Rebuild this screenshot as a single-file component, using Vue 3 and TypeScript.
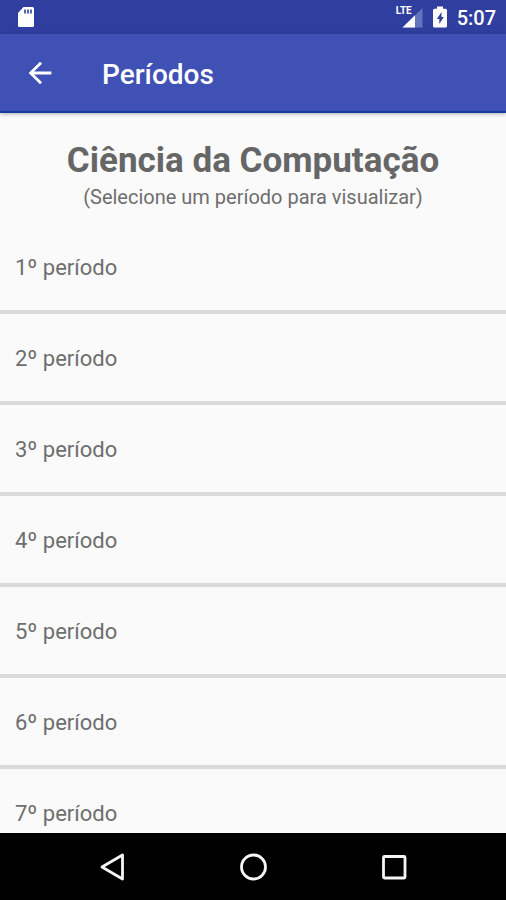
<script setup lang="ts">
interface Period {
  id: number
  label: string
}

const course = 'Ciência da Computação'
const periods: Period[] = Array.from({ length: 7 }, (_, i) => ({
  id: i + 1,
  label: `${i + 1}º período`,
}))
</script>

<template>
  <div class="screen">
    <div class="status">
      <svg class="sd" viewBox="0 0 18 22" aria-hidden="true">
        <path fill="#fff" d="M6.500 1H15.500a1.500 1.500 0 0 1 1.500 1.500v17a1.500 1.500 0 0 1-1.500 1.500h-13a1.500 1.500 0 0 1-1.500-1.500V7z" />
        <path stroke="#303f9f" stroke-width="1.600" d="M8 3.500v4M11 3.500v4M14 3.500v4" />
      </svg>
      <div class="indicators">
        <div class="signal">
          <svg viewBox="0 0 26 22" aria-hidden="true">
            <path fill="#6573bd" d="M25.500 2v19.500H5.500z" />
            <path fill="#fff" d="M18 9.300V21.500H5.500z" />
          </svg>
          <span class="lte">LTE</span>
        </div>
        <svg class="battery" viewBox="0 0 16 22" aria-hidden="true">
          <path fill="#fff" d="M5 .5h6v2.300H13.500A1.500 1.500 0 0 1 15 4.300V20a1.500 1.500 0 0 1-1.500 1.500h-11A1.500 1.500 0 0 1 1 20V4.300a1.500 1.500 0 0 1 1.500-1.500H5z" />
          <path fill="#303f9f" d="M9.500 6 4.800 13H7.300v5L11.800 11H9.500z" />
        </svg>
        <time class="clock">5:07</time>
      </div>
    </div>

    <header class="appbar">
      <button class="back" type="button" aria-label="Voltar">
        <svg viewBox="0 0 24 24" aria-hidden="true">
          <path fill="#fff" d="M20 11H7.830l5.590-5.590L12 4l-8 8 8 8 1.410-1.410L7.830 13H20z" />
        </svg>
      </button>
      <h1 class="title">Períodos</h1>
    </header>

    <main class="content">
      <div class="intro">
        <h2 class="course">{{ course }}</h2>
        <p class="hint">(Selecione um período para visualizar)</p>
      </div>
      <ul class="list">
        <li v-for="period in periods" :key="period.id" class="item">
          <button class="row" type="button">{{ period.label }}</button>
        </li>
      </ul>
    </main>

    <nav class="navbar">
      <button class="key" type="button" aria-label="Anterior">
        <svg viewBox="0 0 32 32" aria-hidden="true">
          <path d="M27.500 4v24L7 16z" />
        </svg>
      </button>
      <button class="key" type="button" aria-label="Início">
        <svg viewBox="0 0 32 32" aria-hidden="true">
          <circle cx="16.500" cy="16" r="12" />
        </svg>
      </button>
      <button class="key" type="button" aria-label="Recentes">
        <svg viewBox="0 0 32 32" aria-hidden="true">
          <rect x="4.500" y="5.500" width="21.500" height="21.500" rx="1" />
        </svg>
      </button>
    </nav>
  </div>
</template>

<style>
body {
  margin: 0;
  background: #fafafa;
}
</style>

<style scoped>
.screen {
  display: flex;
  flex-direction: column;
  height: 100vh;
  background: #fafafa;
  color: #6e6e6e;
  font-family: Roboto, "Noto Sans", sans-serif;
}

button {
  margin: 0;
  padding: 0;
  border: 0;
  background: none;
  color: inherit;
  font: inherit;
  cursor: pointer;
}

svg {
  display: block;
}

.status {
  display: flex;
  flex: none;
  align-items: center;
  justify-content: space-between;
  height: 34px;
  padding: 0 10px 0 17px;
  background: #303f9f;
  color: #fff;
}

.sd {
  width: 18px;
  height: 22px;
}

.indicators {
  display: flex;
  align-items: center;
  gap: 9px;
}

.signal {
  position: relative;
}

.signal svg {
  width: 26px;
  height: 22px;
}

.lte {
  position: absolute;
  top: 0;
  left: -1px;
  background: #303f9f;
  font-size: 10px;
  font-weight: 700;
  line-height: 10px;
}

.battery {
  width: 16px;
  height: 22px;
}

.clock {
  padding-top: 2px;
  font-size: 20px;
  font-weight: 500;
  line-height: 24px;
}

.appbar {
  position: relative;
  display: flex;
  flex: none;
  align-items: center;
  gap: 45px;
  height: 77px;
  padding: 0 23px;
  border-bottom: 2px solid #1a3a9e;
  background: #3f51b5;
  box-shadow: 0 1px 4px rgba(0, 0, 0, 0.3);
  color: #fff;
}

.back svg {
  width: 34px;
  height: 34px;
}

.title {
  margin: 0;
  padding-top: 4px;
  font-size: 28px;
  font-weight: 500;
  line-height: 34px;
}

.content {
  flex: 1;
  min-height: 0;
  overflow-y: auto;
  scrollbar-width: none;
}

.intro {
  padding: 26px 16px 12px;
  text-align: center;
}

.course {
  margin: 0;
  color: #666;
  font-size: 35px;
  font-weight: 700;
  line-height: 44px;
}

.hint {
  margin: 0;
  font-size: 20px;
  line-height: 28px;
}

.list {
  margin: 0;
  padding: 0;
  list-style: none;
}

.item {
  border-bottom: 4px solid #dadada;
}

.row {
  display: block;
  width: 100%;
  height: 87px;
  padding: 2px 15px 0;
  font-size: 22px;
  text-align: left;
}

.navbar {
  display: flex;
  flex: none;
  align-items: center;
  justify-content: center;
  height: 67px;
  background: #000;
}

.key {
  display: flex;
  flex: 0 0 28%;
  justify-content: center;
}

.key svg {
  width: 32px;
  height: 32px;
  fill: none;
  stroke: #f5f5f5;
  stroke-width: 2.800;
  stroke-linejoin: round;
}
</style>
